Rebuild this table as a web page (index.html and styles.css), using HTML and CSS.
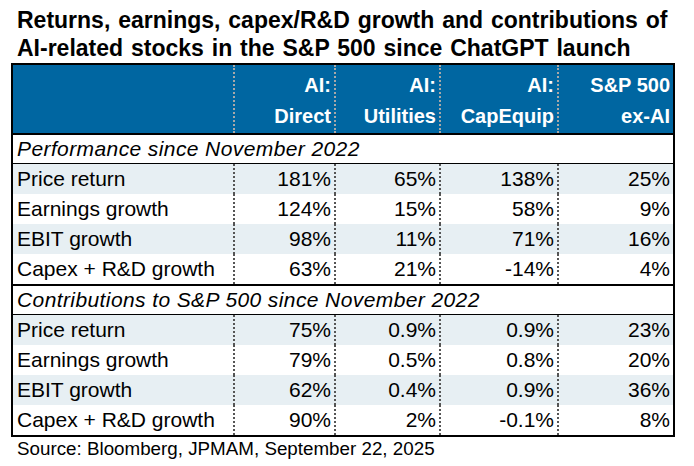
FILE: index.html
```html
<!DOCTYPE html>
<html>
<head>
<meta charset="utf-8">
<link rel="stylesheet" href="styles.css">
</head>
<body>
<div class="page">
  <h1 class="title">Returns, earnings, capex/R&amp;D growth and contributions of<br>AI-related stocks in the S&amp;P 500 since ChatGPT launch</h1>
  <div class="table">
    <div class="row head">
      <div class="cell lbl"></div>
      <div class="cell">AI:<br>Direct</div>
      <div class="cell">AI:<br>Utilities</div>
      <div class="cell">AI:<br>CapEquip</div>
      <div class="cell">S&amp;P 500<br>ex-AI</div>
    </div>
    <div class="section">Performance since November 2022</div>
    <div class="row alt">
      <div class="cell lbl">Price return</div><div class="cell">181%</div><div class="cell">65%</div><div class="cell">138%</div><div class="cell">25%</div>
    </div>
    <div class="row">
      <div class="cell lbl">Earnings growth</div><div class="cell">124%</div><div class="cell">15%</div><div class="cell">58%</div><div class="cell">9%</div>
    </div>
    <div class="row alt">
      <div class="cell lbl">EBIT growth</div><div class="cell">98%</div><div class="cell">11%</div><div class="cell">71%</div><div class="cell">16%</div>
    </div>
    <div class="row">
      <div class="cell lbl">Capex + R&amp;D growth</div><div class="cell">63%</div><div class="cell">21%</div><div class="cell">-14%</div><div class="cell">4%</div>
    </div>
    <div class="section second">Contributions to S&amp;P 500 since November 2022</div>
    <div class="row alt">
      <div class="cell lbl">Price return</div><div class="cell">75%</div><div class="cell">0.9%</div><div class="cell">0.9%</div><div class="cell">23%</div>
    </div>
    <div class="row">
      <div class="cell lbl">Earnings growth</div><div class="cell">79%</div><div class="cell">0.5%</div><div class="cell">0.8%</div><div class="cell">20%</div>
    </div>
    <div class="row alt">
      <div class="cell lbl">EBIT growth</div><div class="cell">62%</div><div class="cell">0.4%</div><div class="cell">0.9%</div><div class="cell">36%</div>
    </div>
    <div class="row">
      <div class="cell lbl">Capex + R&amp;D growth</div><div class="cell">90%</div><div class="cell">2%</div><div class="cell">-0.1%</div><div class="cell">8%</div>
    </div>
  </div>
  <p class="source">Source: Bloomberg, JPMAM, September 22, 2025</p>
</div>
</body>
</html>
```

FILE: styles.css
```css
html, body {
  margin: 0;
  background: #fff;
}
.page {
  padding: 6px 0 0 11px;
  font-family: "Liberation Sans", Arial, sans-serif;
  color: #000;
}
.title {
  margin: 0 0 1px 6px;
  font-size: 23px;
  line-height: 28px;
  font-weight: bold;
  word-spacing: 1.5px;
  white-space: nowrap;
}
.table {
  width: 660px;
  border: 2px solid #000;
}
.row {
  display: grid;
  grid-template-columns: 220px 101px 105px 118px 116px;
  font-size: 21px;
  line-height: 30px;
}
.row.alt {
  background: #e7eff3;
}
.cell {
  text-align: right;
  padding-right: 3px;
  border-left: 2px dotted #555;
  white-space: nowrap;
}
.cell.lbl {
  text-align: left;
  padding: 0 0 0 4px;
  border-left: 0;
}
.head {
  background: #0066a1;
  color: #fff;
  font-weight: bold;
  font-size: 20px;
  line-height: 31px;
  padding: 5px 0 1px;
  border-bottom: 2px solid #000;
}
.head .cell {
  border-left-color: #a8a8a8;
  margin: -5px 0 -1px;
  padding-top: 5px;
  padding-bottom: 1px;
}
.head .cell.lbl {
  margin: 0;
  padding: 0;
}
.section {
  font-size: 21px;
  font-style: italic;
  letter-spacing: 0.4px;
  line-height: 28px;
  padding-left: 4px;
  border-bottom: 1px solid #000;
}
.section.second {
  border-top: 2px solid #000;
}
.source {
  margin: 0 0 0 6px;
  font-size: 18.8px;
  line-height: 24px;
}
```
